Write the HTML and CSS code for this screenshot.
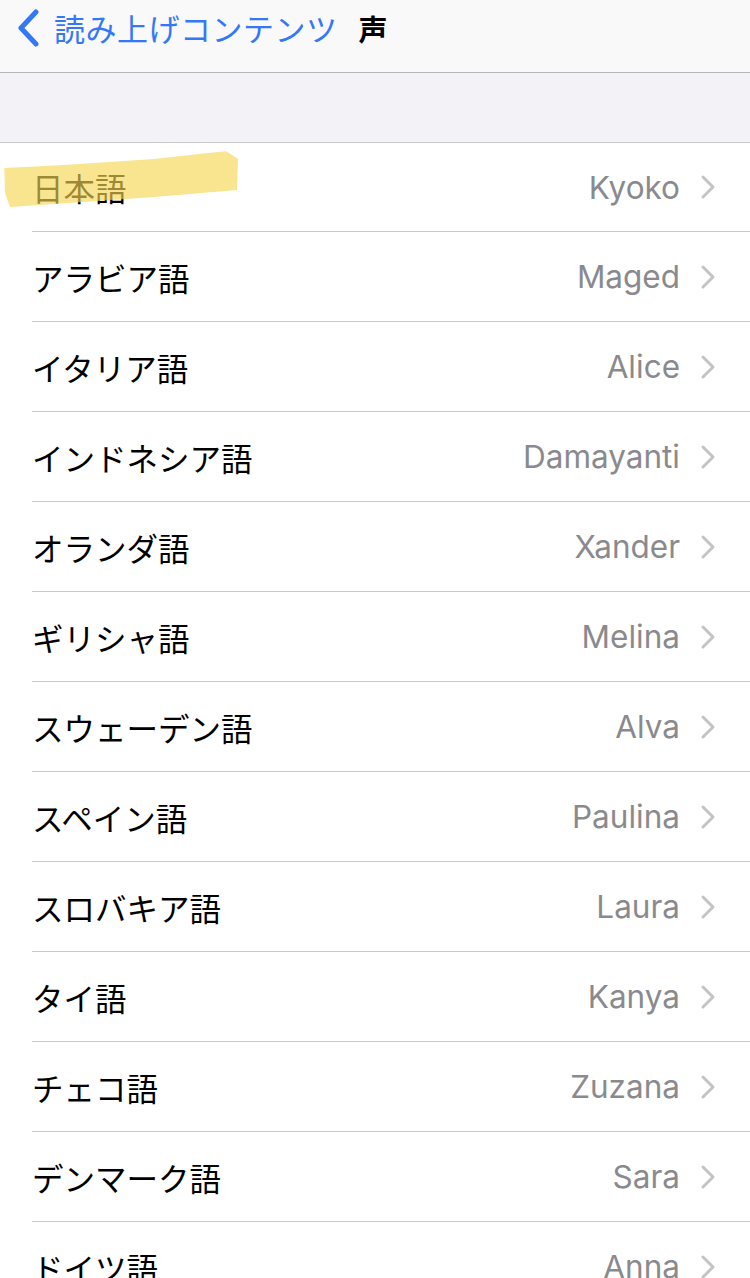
FILE: index.html
```html
<!DOCTYPE html>
<html lang="ja">
<head>
  <meta charset="UTF-8" />
  <title>声</title>
  <link rel="stylesheet" href="styles.css">
</head>
<body>
  <div class="navbar">
    <a class="back" href="#">
      <svg class="back-icon" width="24" height="38" viewBox="0 0 24 38">
        <path d="M20 3 L5 19 L20 35" fill="none" stroke="#3478f6" stroke-width="5" stroke-linecap="round" stroke-linejoin="round"/>
      </svg>
      <span>読み上げコンテンツ</span>
    </a>
    <span class="nav-title">声</span>
  </div>

  <div class="spacer"></div>

  <ul class="list">
    <li class="row first">
      <span class="lang">日本語</span>
      <span class="voice">Kyoko</span>
      <svg class="chev" width="16" height="26" viewBox="0 0 16 26"><path d="M3 3 L13 13 L3 23" fill="none" stroke="#c4c4c7" stroke-width="3" stroke-linecap="round" stroke-linejoin="round"/></svg>
      <span class="marker"></span>
    </li>
    <li class="row"><span class="lang">アラビア語</span><span class="voice">Maged</span><svg class="chev" width="16" height="26" viewBox="0 0 16 26"><path d="M3 3 L13 13 L3 23" fill="none" stroke="#c4c4c7" stroke-width="3" stroke-linecap="round" stroke-linejoin="round"/></svg></li>
    <li class="row"><span class="lang">イタリア語</span><span class="voice">Alice</span><svg class="chev" width="16" height="26" viewBox="0 0 16 26"><path d="M3 3 L13 13 L3 23" fill="none" stroke="#c4c4c7" stroke-width="3" stroke-linecap="round" stroke-linejoin="round"/></svg></li>
    <li class="row"><span class="lang">インドネシア語</span><span class="voice">Damayanti</span><svg class="chev" width="16" height="26" viewBox="0 0 16 26"><path d="M3 3 L13 13 L3 23" fill="none" stroke="#c4c4c7" stroke-width="3" stroke-linecap="round" stroke-linejoin="round"/></svg></li>
    <li class="row"><span class="lang">オランダ語</span><span class="voice">Xander</span><svg class="chev" width="16" height="26" viewBox="0 0 16 26"><path d="M3 3 L13 13 L3 23" fill="none" stroke="#c4c4c7" stroke-width="3" stroke-linecap="round" stroke-linejoin="round"/></svg></li>
    <li class="row"><span class="lang">ギリシャ語</span><span class="voice">Melina</span><svg class="chev" width="16" height="26" viewBox="0 0 16 26"><path d="M3 3 L13 13 L3 23" fill="none" stroke="#c4c4c7" stroke-width="3" stroke-linecap="round" stroke-linejoin="round"/></svg></li>
    <li class="row"><span class="lang">スウェーデン語</span><span class="voice">Alva</span><svg class="chev" width="16" height="26" viewBox="0 0 16 26"><path d="M3 3 L13 13 L3 23" fill="none" stroke="#c4c4c7" stroke-width="3" stroke-linecap="round" stroke-linejoin="round"/></svg></li>
    <li class="row"><span class="lang">スペイン語</span><span class="voice">Paulina</span><svg class="chev" width="16" height="26" viewBox="0 0 16 26"><path d="M3 3 L13 13 L3 23" fill="none" stroke="#c4c4c7" stroke-width="3" stroke-linecap="round" stroke-linejoin="round"/></svg></li>
    <li class="row"><span class="lang">スロバキア語</span><span class="voice">Laura</span><svg class="chev" width="16" height="26" viewBox="0 0 16 26"><path d="M3 3 L13 13 L3 23" fill="none" stroke="#c4c4c7" stroke-width="3" stroke-linecap="round" stroke-linejoin="round"/></svg></li>
    <li class="row"><span class="lang">タイ語</span><span class="voice">Kanya</span><svg class="chev" width="16" height="26" viewBox="0 0 16 26"><path d="M3 3 L13 13 L3 23" fill="none" stroke="#c4c4c7" stroke-width="3" stroke-linecap="round" stroke-linejoin="round"/></svg></li>
    <li class="row"><span class="lang">チェコ語</span><span class="voice">Zuzana</span><svg class="chev" width="16" height="26" viewBox="0 0 16 26"><path d="M3 3 L13 13 L3 23" fill="none" stroke="#c4c4c7" stroke-width="3" stroke-linecap="round" stroke-linejoin="round"/></svg></li>
    <li class="row"><span class="lang">デンマーク語</span><span class="voice">Sara</span><svg class="chev" width="16" height="26" viewBox="0 0 16 26"><path d="M3 3 L13 13 L3 23" fill="none" stroke="#c4c4c7" stroke-width="3" stroke-linecap="round" stroke-linejoin="round"/></svg></li>
    <li class="row"><span class="lang">ドイツ語</span><span class="voice">Anna</span><svg class="chev" width="16" height="26" viewBox="0 0 16 26"><path d="M3 3 L13 13 L3 23" fill="none" stroke="#c4c4c7" stroke-width="3" stroke-linecap="round" stroke-linejoin="round"/></svg></li>
  </ul>
</body>
</html>
```

FILE: styles.css
```css
body {
  margin: 0;
  background: #fff;
  font-family: "Noto Sans CJK JP", "Noto Sans", sans-serif;
  overflow: hidden;
}

.navbar {
  height: 73px;
  background: #f9f9fa;
  border-bottom: 1px solid #b6b6ba;
  display: flex;
  align-items: center;
  box-sizing: border-box;
  padding: 0 0 17px 16px;
}
.back {
  display: flex;
  align-items: center;
  gap: 14px;
  color: #3478f6;
  text-decoration: none;
  font-size: 31px;
  letter-spacing: 0.5px;
}
.back-icon { display: block; }
.nav-title {
  margin-left: 21px;
  font-size: 29px;
  font-weight: 700;
  color: #000;
}

.spacer {
  height: 69px;
  background: #f2f2f7;
  border-bottom: 1px solid #c8c8cc;
}

.list {
  list-style: none;
  margin: 0;
  padding: 0 0 0 32px;
}
.row {
  position: relative;
  height: 89px;
  border-bottom: 1px solid #c8c8cc;
  display: flex;
  align-items: center;
  padding-right: 34px;
}
.row.first { height: 88px; }
.lang {
  flex: 1;
  font-size: 31.5px;
  color: #000;
}
.voice {
  font-family: "Inter", "Noto Sans", sans-serif;
  font-size: 31.5px;
  color: #8a8a8e;
  margin-right: 20px;
}
.chev { display: block; }

.marker {
  position: absolute;
  left: -28px;
  top: 8px;
  width: 236px;
  height: 58px;
  background: rgba(245, 213, 82, 0.64);
  clip-path: polygon(0 17px, 60px 14px, 150px 8px, 222px 0, 234px 8px, 233px 39px, 150px 46px, 6px 56px, 1px 42px);
  filter: blur(0.8px);
}
```
